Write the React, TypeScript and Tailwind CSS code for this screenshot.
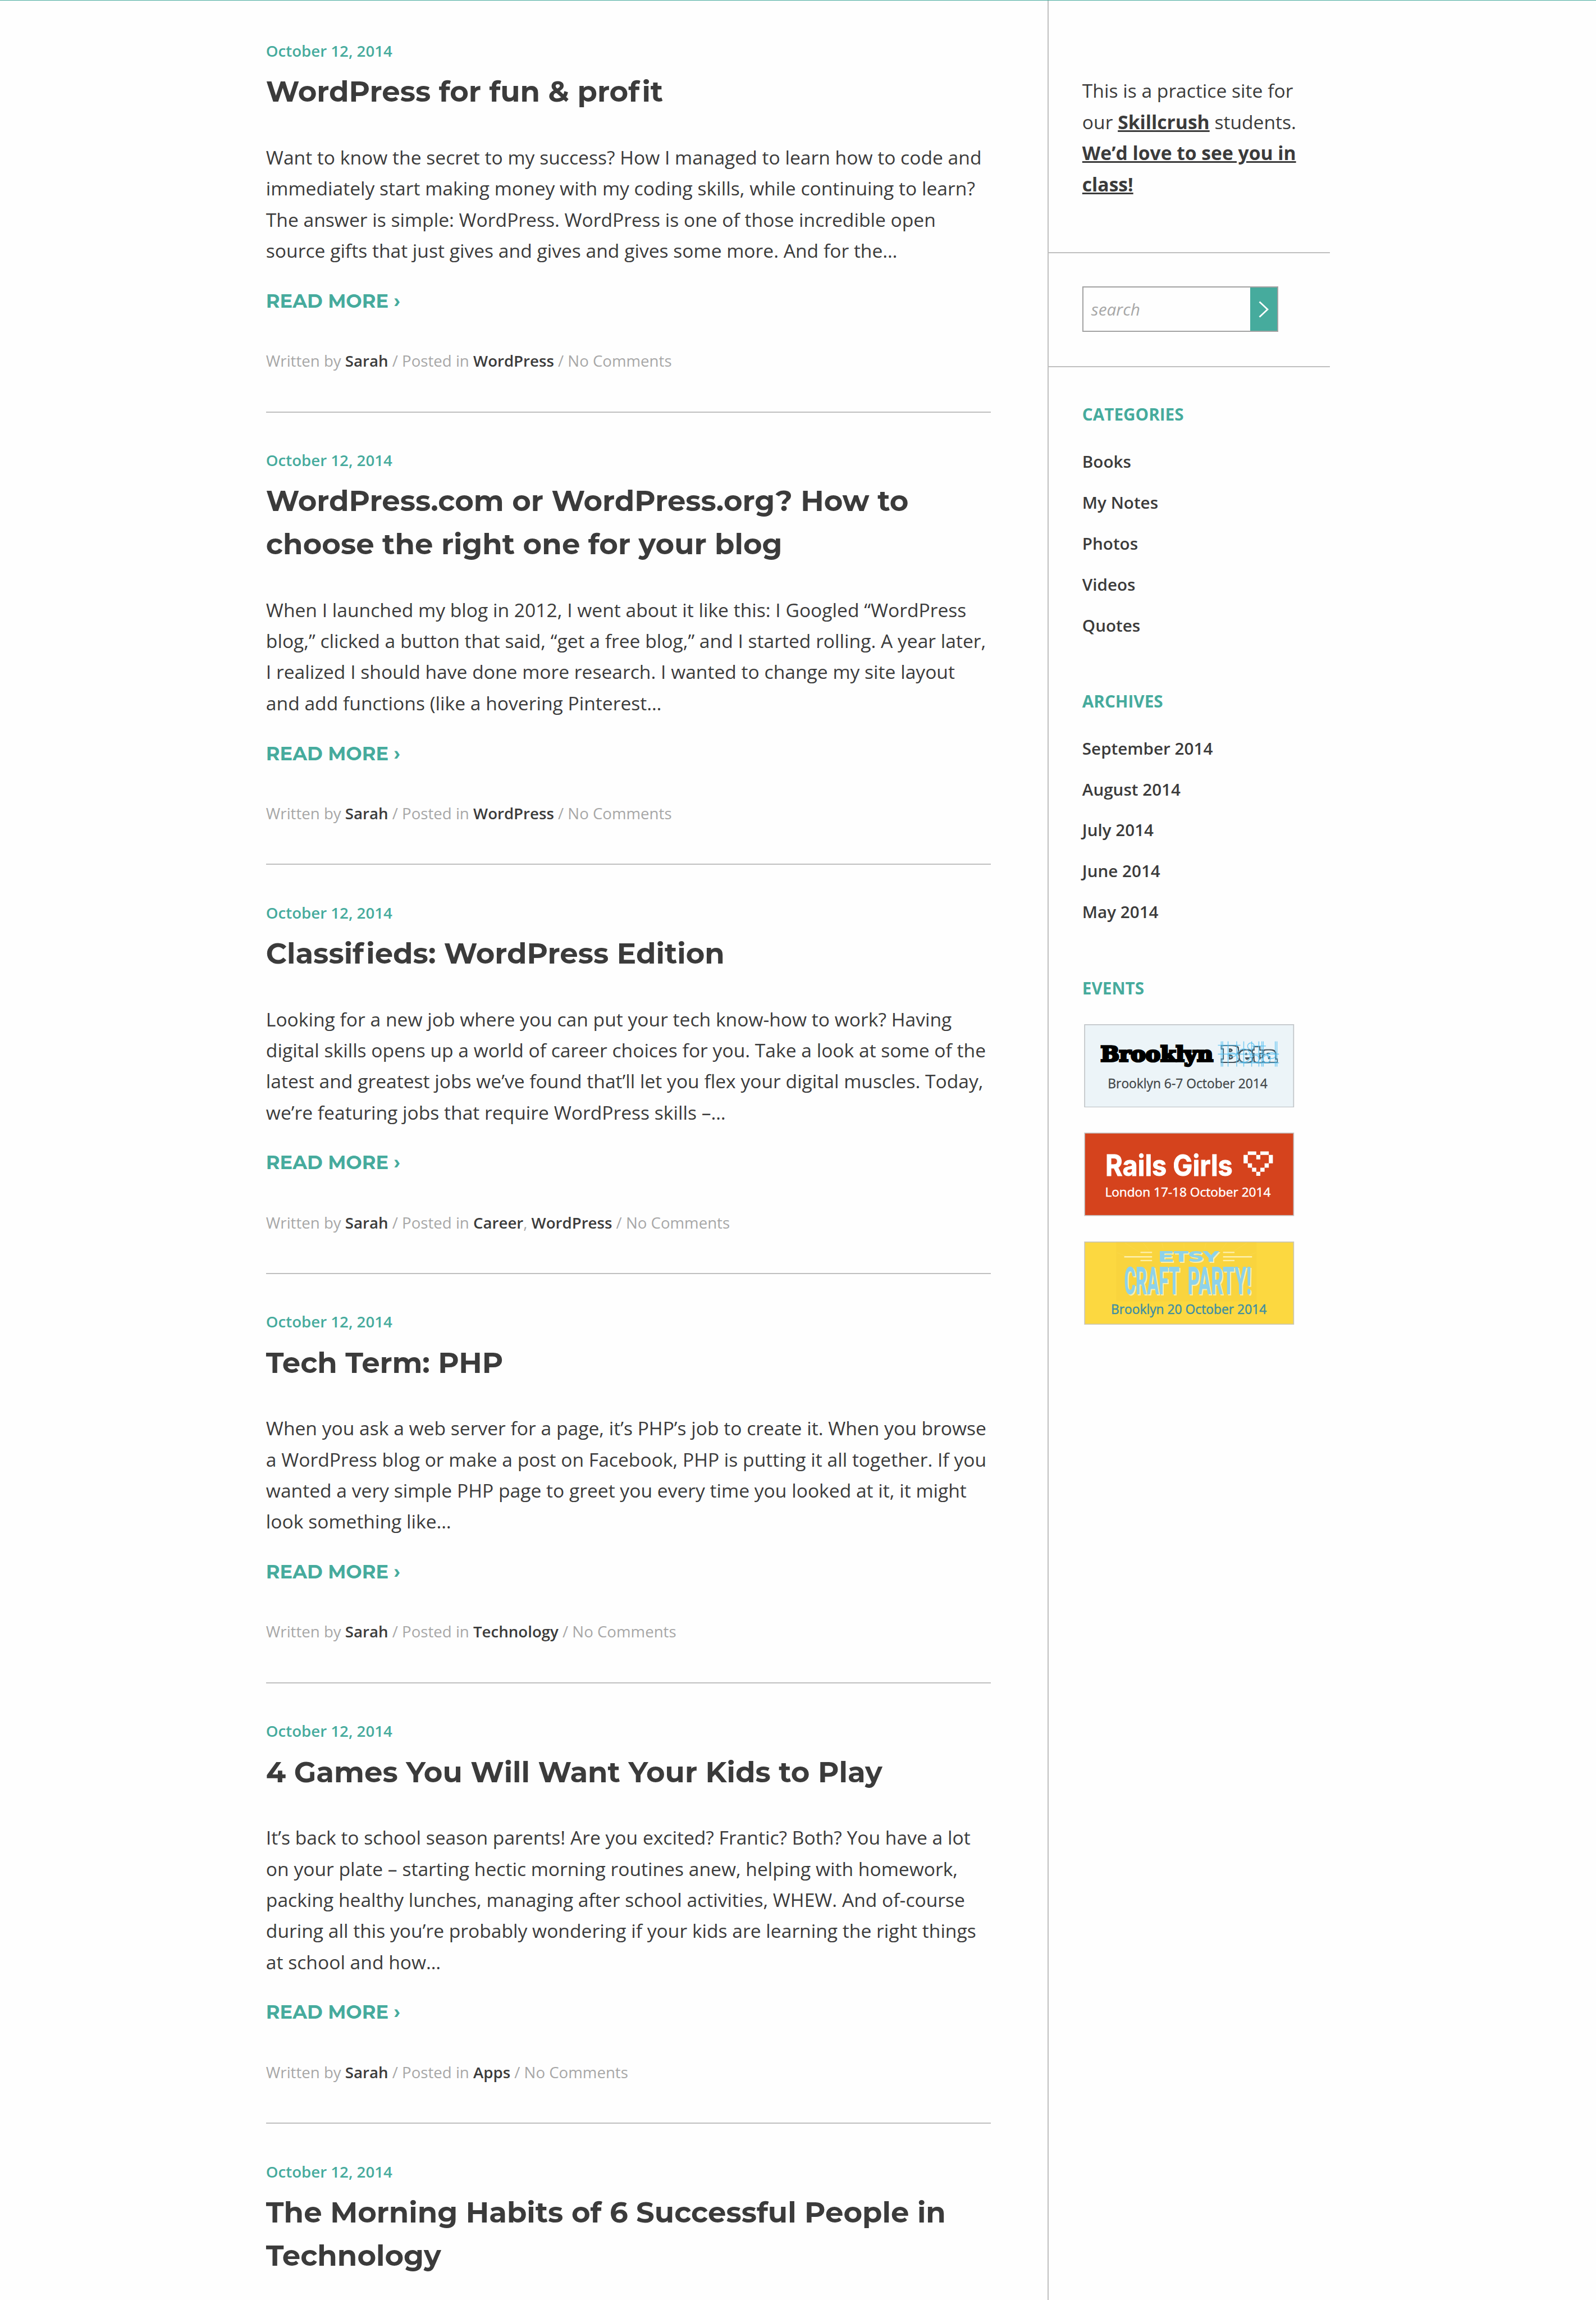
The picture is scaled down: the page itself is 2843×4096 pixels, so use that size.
import { Fragment, type ReactNode } from "react";

type Post = {
  title: ReactNode[];
  lines?: string[];
  tags?: string[];
};

/** An "f" with a little extra room before the following "i". */
const WideF = () => <span className="tracking-[4.3px]">f</span>;

const posts: Post[] = [
  {
    title: [<>WordPress for fun &amp; pro<WideF />it</>],
    lines: [
      "Want to know the secret to my success? How I managed to learn how to code and",
      "immediately start making money with my coding skills, while continuing to learn?",
      "The answer is simple: WordPress. WordPress is one of those incredible open",
      "source gifts that just gives and gives and gives some more. And for the…",
    ],
    tags: ["WordPress"],
  },
  {
    title: ["WordPress.com or WordPress.org? How to", "choose the right one for your blog"],
    lines: [
      "When I launched my blog in 2012, I went about it like this: I Googled “WordPress",
      "blog,” clicked a button that said, “get a free blog,” and I started rolling. A year later,",
      "I realized I should have done more research. I wanted to change my site layout",
      "and add functions (like a hovering Pinterest…",
    ],
    tags: ["WordPress"],
  },
  {
    title: [<>Classi<WideF />ieds: WordPress Edition</>],
    lines: [
      "Looking for a new job where you can put your tech know-how to work? Having",
      "digital skills opens up a world of career choices for you. Take a look at some of the",
      "latest and greatest jobs we’ve found that’ll let you flex your digital muscles. Today,",
      "we’re featuring jobs that require WordPress skills –…",
    ],
    tags: ["Career", "WordPress"],
  },
  {
    title: ["Tech Term: PHP"],
    lines: [
      "When you ask a web server for a page, it’s PHP’s job to create it. When you browse",
      "a WordPress blog or make a post on Facebook, PHP is putting it all together. If you",
      "wanted a very simple PHP page to greet you every time you looked at it, it might",
      "look something like…",
    ],
    tags: ["Technology"],
  },
  {
    title: ["4 Games You Will Want Your Kids to Play"],
    lines: [
      "It’s back to school season parents! Are you excited? Frantic? Both? You have a lot",
      "on your plate – starting hectic morning routines anew, helping with homework,",
      "packing healthy lunches, managing after school activities, WHEW. And of-course",
      "during all this you’re probably wondering if your kids are learning the right things",
      "at school and how…",
    ],
    tags: ["Apps"],
  },
  { title: ["The Morning Habits of 6 Successful People in", "Technology"] },
];

const lists = [
  { heading: "CATEGORIES", items: ["Books", "My Notes", "Photos", "Videos", "Quotes"] },
  {
    heading: "ARCHIVES",
    items: ["September 2014", "August 2014", "July 2014", "June 2014", "May 2014"],
  },
];

const withBreaks = (lines: ReactNode[]) =>
  lines.map((line, i) => (
    <Fragment key={i}>
      {i > 0 && <br />}
      {line}
    </Fragment>
  ));

function PostEntry({ post }: { post: Post }) {
  return (
    <article className="whitespace-nowrap">
      <p className="text-[27.64px] leading-[45.6px] font-semibold text-[#46ab9d]">October 12, 2014</p>
      <h2 className="mt-[10.75px] font-['Montserrat','Inter',sans-serif] text-[51.33px] leading-[77px] font-bold">
        {withBreaks(post.title)}
      </h2>
      {post.lines && (
        <>
          <p className="mt-[51.5px] text-[33.62px] leading-[55.38px]">{withBreaks(post.lines)}</p>
          <a className="mt-[33.4px] block font-['Montserrat','Inter',sans-serif] text-[33.65px] leading-[55.4px] font-bold text-[#46ab9d]">
            READ MORE ›
          </a>
          <p className="mt-[56.8px] mb-[62.3px] border-b-2 border-[#bfbfbf] pb-[67px] text-[27.64px] leading-[45.6px] text-[#a7a7a7]">
            Written by <span className="font-semibold text-[#3b3b3b]">Sarah</span> / Posted in{" "}
            {post.tags?.map((tag, i) => (
              <Fragment key={tag}>
                {i > 0 && ", "}
                <span className="font-semibold text-[#3b3b3b]">{tag}</span>
              </Fragment>
            ))}{" "}
            / No Comments
          </p>
        </>
      )}
    </article>
  );
}

function BrooklynBeta() {
  return (
    <svg viewBox="79 324 1138 452" className="block h-[148.5px] w-[374.5px]">
      <defs>
        <filter id="fat-outline" x="-10%" y="-20%" width="120%" height="140%">
          <feMorphology in="SourceAlpha" operator="dilate" radius="8" result="outer" />
          <feMorphology in="SourceAlpha" operator="dilate" radius="4" result="inner" />
          <feFlood floodColor="#44535b" />
          <feComposite in2="outer" operator="in" />
          <feComposite in2="inner" operator="out" />
        </filter>
      </defs>
      <rect x="81.5" y="326.5" width="1133" height="447" fill="#ecf4f8" stroke="#bfc3c6" strokeWidth="5" />
      <text
        x="168" y="525" fontFamily="'DejaVu Serif'" fontWeight="700" fontSize="114" textLength="610"
        lengthAdjust="spacingAndGlyphs" fill="#000" stroke="#000" strokeWidth="11" strokeLinejoin="miter"
      >
        Brooklyn
      </text>
      <text
        x="823" y="525" fontFamily="'DejaVu Serif'" fontWeight="700" fontSize="110" textLength="299"
        lengthAdjust="spacingAndGlyphs" fill="#000" filter="url(#fat-outline)"
      >
        Beta
      </text>
      <g stroke="#4cbcf0" strokeOpacity="0.75" strokeWidth="4.5" fill="none">
        {[822, 830, 859, 906, 944, 987, 1026, 1042, 1050, 1115, 1124].map((x) => (
          <path key={x} d={`M${x} 417V554`} />
        ))}
        <path d="M804 438H926M990 442H1064M804 486H1135M915 533H1135" />
        <circle cx="983" cy="443" r="18" />
        <circle cx="944" cy="494" r="36" />
        <ellipse cx="880" cy="490" rx="22" ry="10" />
        <circle cx="1008" cy="512" r="20" />
        <circle cx="1068" cy="512" r="20" />
        <ellipse cx="1095" cy="494" rx="22" ry="16" />
      </g>
      <text x="207" y="670" fontFamily="'Open Sans'" fontSize="69.5" textLength="866" fill="#424648" stroke="#424648" strokeWidth="1">
        Brooklyn 6-7 October 2014
      </text>
    </svg>
  );
}

function RailsGirls() {
  return (
    <svg viewBox="79 72 1138 452" className="block h-[148.5px] w-[374.5px]">
      <rect x="81.5" y="74.5" width="1133" height="447" fill="#d5431d" stroke="#c5c1c0" strokeWidth="5" />
      <text
        x="194" y="306" fontFamily="Inter" fontWeight="700" fontSize="158" textLength="690"
        lengthAdjust="spacingAndGlyphs" fill="#fff" stroke="#fff" strokeWidth="3"
      >
        Rails Girls
      </text>
      <path
        fill="#fff"
        d="M966 174h46v19h-46zM1034 174h46v19h-46zM943 193h23v46h-23zM1080 193h22v46h-22zM1012 193h22v24h-22zM966 239h23v23h-23zM1057 239h23v23h-23zM989 262h23v22h-23zM1034 262h23v22h-23zM1012 284h22v22h-22z"
      />
      <text x="192" y="418" fontFamily="'Open Sans'" fontSize="69" textLength="898" fill="#fff" stroke="#fff" strokeWidth="1.5">
        London 17-18 October 2014
      </text>
    </svg>
  );
}

function EtsyCraftParty() {
  return (
    <svg viewBox="79 660 1138 452" className="block h-[148.5px] w-[374.5px]">
      <rect x="81.5" y="662.5" width="1133" height="446" fill="#fcd840" stroke="#c8c5b6" strokeWidth="5" />
      <rect x="252" y="665" width="761" height="320" fill="#f9d43e" />
      <path
        d="M300 668l80 50M400 668l30 40M500 668l8 30M620 668v30M740 668l-8 30M850 668l-30 40M960 668l-80 50M256 720l50 20M1010 720l-50 20"
        stroke="#fad74a" strokeWidth="3"
      />
      <path
        d="M384 719H447M296 743H447M384 763H447M832 719H894M832 743H989M832 763H894"
        stroke="#fdf0ae" strokeWidth="7"
      />
      <g fill="#8dd2ea" className="[filter:drop-shadow(6px_6px_0_#fbefae)]">
        <text
          x="481" y="770" fontFamily="Montserrat" fontWeight="800" fontSize="83" textLength="328"
          lengthAdjust="spacingAndGlyphs"
        >
          ETSY
        </text>
        <text
          x="296" y="946" fontFamily="Roboto" fontWeight="800" fontSize="210" textLength="300"
          lengthAdjust="spacingAndGlyphs"
        >
          CRAFT
        </text>
        <text
          x="640" y="946" fontFamily="Roboto" fontWeight="800" fontSize="210" textLength="346"
          lengthAdjust="spacingAndGlyphs"
        >
          PARTY!
        </text>
      </g>
      <text x="224" y="1052" fontFamily="'Open Sans'" fontSize="69.3" textLength="844" fill="#3c8ea3" stroke="#3c8ea3" strokeWidth="1.5">
        Brooklyn 20 October 2014
      </text>
    </svg>
  );
}

function Sidebar() {
  return (
    <aside className="w-[503.5px] shrink-0 border-l-2 border-[#bfbfbf] whitespace-nowrap">
      <p className="border-b-2 border-[#bfbfbf] pt-[133.4px] pb-[93.2px] pl-[60.2px] text-[33.62px] leading-[55.38px]">
        This is a practice site for
        <br />
        our <a className="font-bold underline">Skillcrush</a> students.
        <br />
        <a className="font-bold underline">
          We’d love to see you in
          <br />
          class!
        </a>
      </p>
      <div className="border-b-2 border-[#bfbfbf] pt-[59px] pb-[60.2px] pl-[60.2px]">
        <form className="flex h-[81.4px] w-[349.5px] justify-between border-2 border-[#a2a2a2]">
          <span className="pl-[14px] text-[29.8px] leading-[77.4px] text-[#a7a7a7] italic">search</span>
          <span className="flex w-[48px] items-center justify-center bg-[#46ab9d]">
            <svg viewBox="0 0 18 30" className="h-[30px] w-[18px]" fill="none" stroke="#fff" strokeWidth="2.8">
              <path d="M1.5 1.5L16 15L1.5 28.5" />
            </svg>
          </span>
        </form>
      </div>
      <div className="pt-[60.8px] pl-[60.2px]">
        {lists.map((list) => (
          <section key={list.heading} className="mb-[86.5px]">
            <h3 className="text-[29.7px] leading-[48.86px] font-bold text-[#46ab9d]">{list.heading}</h3>
            <ul className="mt-[34.9px] flex flex-col gap-[24px] text-[29.61px] leading-[48.86px] font-semibold">
              {list.items.map((item) => (
                <li key={item}>{item}</li>
              ))}
            </ul>
          </section>
        ))}
        <section>
          <h3 className="text-[29.7px] leading-[48.86px] font-bold text-[#46ab9d]">EVENTS</h3>
          <div className="mt-[39.5px] ml-[3.2px] flex flex-col gap-[45px]">
            <BrooklynBeta />
            <RailsGirls />
            <EtsyCraftParty />
          </div>
        </section>
      </div>
    </aside>
  );
}

export default function App() {
  return (
    <div className="h-[4096px] overflow-hidden border-t border-[#46ab9d] bg-[#fefefe] font-['Open_Sans','Noto_Sans',sans-serif] text-[#3b3b3b]">
      <div className="mx-auto flex h-full w-[1895.3px] justify-between">
        <main className="w-[1291.2px] pt-[67px]">
          {posts.map((post, i) => (
            <PostEntry key={i} post={post} />
          ))}
        </main>
        <Sidebar />
      </div>
    </div>
  );
}
